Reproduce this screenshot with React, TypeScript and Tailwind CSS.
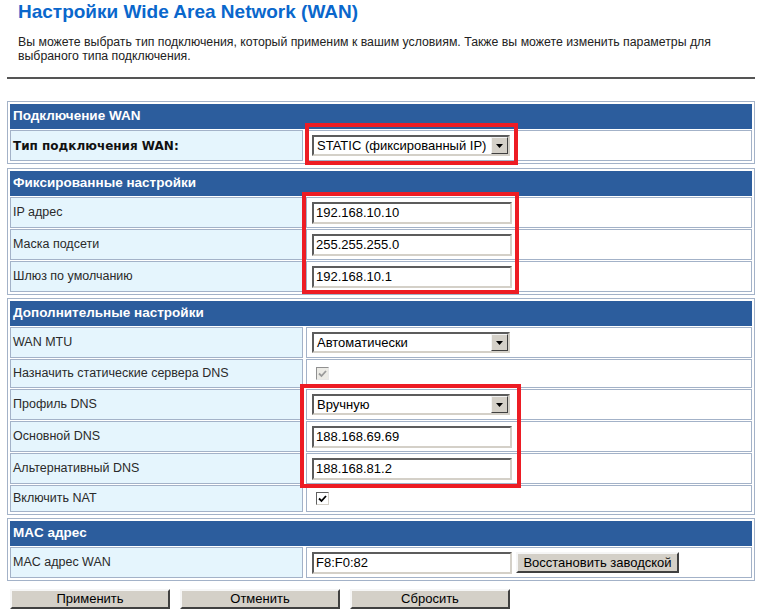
import type { ReactNode } from 'react'

function Section({ title, children, className = '' }: { title: string; children: ReactNode; className?: string }) {
  return (
    <div className={`border border-[#a3b2c8] pt-[2px] px-[2px] pb-[2px] flex flex-col gap-[1px] ${className}`}>
      <div className="h-[25px] bg-[#2c5d9d] text-white font-bold text-[13.5px] pl-[3px] flex items-center">
        {title}
      </div>
      {children}
    </div>
  )
}

function Row({ label, h = 'h-[31px]', bold = false, children }: { label: string; h?: string; bold?: boolean; children: ReactNode }) {
  return (
    <div className={`grid grid-cols-[293px_1fr] gap-x-[3px] ${h}`}>
      <div
        className={
          bold
            ? "border border-[#a3b2c8] bg-[#e5f5fd] flex items-center pl-[2px] text-[12px] font-bold text-[#111] font-['DejaVu_Sans',Verdana,sans-serif]"
            : 'border border-[#a3b2c8] bg-[#e5f5fd] flex items-center pl-[2px] text-[12.5px] text-[#2a2a2a]'
        }
      >
        {label}
      </div>
      <div className="border border-[#a3b2c8] bg-white flex items-center pl-[5px]">{children}</div>
    </div>
  )
}

function TextBox({ value }: { value: string }) {
  return (
    <div className="w-[200px] h-[22px] border-2 border-t-[#5c5c5c] border-l-[#5c5c5c] border-b-[#d4d0c8] border-r-[#d4d0c8] bg-white flex items-center pl-[2px] text-[13px] text-black">
      {value}
    </div>
  )
}

function Select({ value }: { value: string }) {
  return (
    <div className="w-[198px] h-[21px] border-2 border-t-[#5c5c5c] border-l-[#5c5c5c] border-b-[#d4d0c8] border-r-[#d4d0c8] bg-white flex items-center justify-between text-[13px] text-black">
      <span className="pl-[3px]">{value}</span>
      <div className="w-[17px] h-[17px] bg-[#d4d0c8] border border-t-[#f4f4f4] border-l-[#f4f4f4] border-b-[#404040] border-r-[#404040] flex items-center justify-center">
        <svg width="7" height="4" viewBox="0 0 7 4">
          <polygon points="0,0 7,0 3.5,4" fill="#000" />
        </svg>
      </div>
    </div>
  )
}

function Checkbox({ disabled = false }: { disabled?: boolean }) {
  return (
    <div
      className={
        disabled
          ? 'ml-[4px] w-[13px] h-[13px] border border-t-[#909090] border-l-[#909090] border-b-[#e8e8e8] border-r-[#e8e8e8] bg-[#ecebe6] flex items-center justify-center'
          : 'ml-[4px] w-[13px] h-[13px] border border-t-[#606060] border-l-[#606060] border-b-[#d4d0c8] border-r-[#d4d0c8] bg-white flex items-center justify-center'
      }
    >
      <svg width="9" height="8" viewBox="0 0 9 8">
        <polyline points="1,3.5 3.5,6 8,1" fill="none" stroke={disabled ? '#9a9a9a' : '#000'} strokeWidth="1.8" />
      </svg>
    </div>
  )
}

function Button({ children, className = '' }: { children: ReactNode; className?: string }) {
  return (
    <div
      className={`h-[20px] bg-[#d4d0c8] border-2 border-t-[#f6f6f6] border-l-[#f6f6f6] border-b-[#404040] border-r-[#404040] flex items-center justify-center text-[13px] text-black ${className}`}
    >
      {children}
    </div>
  )
}

export default function App() {
  return (
    <div className="relative w-[762px] h-[614px] bg-white overflow-hidden font-['Liberation_Sans',Arial,sans-serif]">
      <div className="pl-[18px] pt-[1px] text-[19px] leading-[22px] font-bold text-[#0a67cc]">
        Настройки Wide Area Network (WAN)
      </div>
      <div className="pl-[18px] mt-[12px] text-[12.3px] leading-[14px] text-[#222]">
        Вы можете выбрать тип подключения, который применим к вашим условиям. Также вы можете изменить параметры для
        <br />
        выбраного типа подключения.
      </div>
      <div className="mx-[7px] mt-[14px] h-[2px] bg-[#555]" />

      <div className="mx-[7px] mt-[22px] flex flex-col">
        <Section title="Подключение WAN">
          <Row label="Тип подключения WAN:" bold>
            <Select value="STATIC (фиксированный IP)" />
          </Row>
        </Section>

        <Section title="Фиксированные настройки" className="mt-[4px]">
          <Row label="IP адрес">
            <TextBox value="192.168.10.10" />
          </Row>
          <Row label="Маска подсети">
            <TextBox value="255.255.255.0" />
          </Row>
          <Row label="Шлюз по умолчанию">
            <TextBox value="192.168.10.1" />
          </Row>
        </Section>

        <Section title="Дополнительные настройки" className="mt-[3px]">
          <Row label="WAN MTU">
            <Select value="Автоматически" />
          </Row>
          <Row label="Назначить статические сервера DNS" h="h-[29px]">
            <Checkbox disabled />
          </Row>
          <Row label="Профиль DNS">
            <Select value="Вручную" />
          </Row>
          <Row label="Основной DNS">
            <TextBox value="188.168.69.69" />
          </Row>
          <Row label="Альтернативный DNS">
            <TextBox value="188.168.81.2" />
          </Row>
          <Row label="Включить NAT" h="h-[27px]">
            <Checkbox />
          </Row>
        </Section>

        <Section title="MAC адрес" className="mt-[3px]">
          <Row label="MAC адрес WAN">
            <TextBox value="F8:F0:82" />
            <Button className="ml-[4px] w-[163px] h-[21px]">Восстановить заводской</Button>
          </Row>
        </Section>
      </div>

      <div className="flex gap-[10px] pl-[10px] mt-[8px]">
        <Button className="w-[160px]">Применить</Button>
        <Button className="w-[160px]">Отменить</Button>
        <Button className="w-[160px]">Сбросить</Button>
      </div>

      <div className="absolute left-[305px] top-[123px] w-[213px] h-[42px] border-[4px] border-[#ed1c24]" />
      <div className="absolute left-[302px] top-[192px] w-[217px] h-[102px] border-[4px] border-[#ed1c24]" />
      <div className="absolute left-[300px] top-[384px] w-[221px] h-[104px] border-[4px] border-[#ed1c24]" />
    </div>
  )
}
